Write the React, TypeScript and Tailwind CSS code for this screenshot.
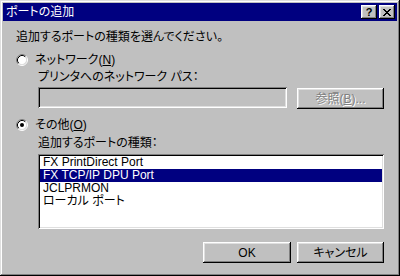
import type { ReactNode } from "react";

const raised =
  "shadow-[inset_-1px_-1px_#000,inset_1px_1px_#fff,inset_-2px_-2px_#808080,inset_2px_2px_#dfdfdf]";
const sunken =
  "shadow-[inset_1px_1px_#808080,inset_-1px_-1px_#fff,inset_2px_2px_#000,inset_-2px_-2px_#dfdfdf]";

function Radio({ checked }: { checked?: boolean }) {
  return (
    <svg width="12" height="12" viewBox="0 0 12 12" className="shrink-0">
      <circle cx="6" cy="6" r="4.5" fill="#fff" />
      <path d="M2.11 9.89 A5.5 5.5 0 0 1 9.89 2.11" fill="none" stroke="#808080" />
      <path d="M9.89 2.11 A5.5 5.5 0 0 1 2.11 9.89" fill="none" stroke="#fff" />
      <path d="M2.82 9.18 A4.5 4.5 0 0 1 9.18 2.82" fill="none" stroke="#000" />
      <path d="M9.18 2.82 A4.5 4.5 0 0 1 2.82 9.18" fill="none" stroke="#dfdfdf" />
      {checked ? <circle cx="6" cy="6" r="2" fill="#000" /> : null}
    </svg>
  );
}

function Button({ children, w, disabled }: { children: ReactNode; w: string; disabled?: boolean }) {
  return (
    <div
      className={`flex h-[21px] items-center justify-center bg-[#c0c0c0] ${raised} ${w} ${
        disabled ? "text-[#808080] [text-shadow:1px_1px_#fff]" : "text-black"
      }`}
    >
      {children}
    </div>
  );
}

const items = ["FX PrintDirect Port", "FX TCP/IP DPU Port", "JCLPRMON", "ローカル ポート"];

export default function App() {
  return (
    <div
      className="h-[276px] w-[400px] bg-[#c0c0c0] p-[3px] text-[12px] leading-[16px] text-black shadow-[inset_-1px_-1px_#000,inset_1px_1px_#dfdfdf,inset_-2px_-2px_#808080,inset_2px_2px_#fff] [font-feature-settings:'palt'] [font-family:'Liberation_Sans','Noto_Sans_CJK_JP',sans-serif]"
    >
      <div className="flex h-[18px] items-center bg-[#000080] pl-[3px] pr-[2px]">
        <span className="flex-1 text-white">ポートの追加</span>
        <div className="flex gap-[2px]">
          <div className={`flex h-[14px] w-[16px] items-center justify-center bg-[#c0c0c0] ${raised}`}>
            <span className="text-[11px] font-bold leading-none">?</span>
          </div>
          <div className={`flex h-[14px] w-[16px] items-center justify-center bg-[#c0c0c0] ${raised}`}>
            <svg width="8" height="7" viewBox="0 0 8 7">
              <path d="M0 0h2v1h1v1h2V1h1V0h2v1H7v1H6v1H5v1h1v1h1v1h1v1H6V6H5V5H3v1H2v1H0V6h1V5h1V4h1V3H2V2H1V1H0z" fill="#000" />
            </svg>
          </div>
        </div>
      </div>

      <div className="pl-[13px]">
        <p className="mt-[8px]">追加するポートの種類を選んでください。</p>

        <div className="mt-[7px] flex h-[16px] items-center gap-[7px]">
          <Radio />
          <span>
            ネットワーク(<u>N</u>)
          </span>
        </div>

        <div className="ml-[22px]">
          <p className="mt-[1px]">プリンタへのネットワーク パス：</p>
          <div className="mt-[2px] flex h-[22px] items-start">
            <div className={`h-[21px] w-[249px] bg-[#c0c0c0] ${sunken}`} />
            <div className="ml-[10px] mt-[1px]">
              <Button w="w-[87px]" disabled>
                参照(<u>B</u>)...
              </Button>
            </div>
          </div>
        </div>

        <div className="mt-[8px] flex h-[16px] items-center gap-[7px]">
          <Radio checked />
          <span>
            その他(<u>O</u>)
          </span>
        </div>

        <div className="ml-[22px]">
          <p className="mt-[2px]">追加するポートの種類：</p>
          <div className={`mt-[3px] h-[75px] w-[346px] bg-white p-[2px] ${sunken}`}>
            {items.map((it, i) => (
              <div
                key={it}
                className={`h-[13px] pl-[3px] leading-[13px] whitespace-pre ${
                  i === 1 ? "bg-[#000080] text-white" : ""
                }`}
              >
                {it}
              </div>
            ))}
          </div>
        </div>

        <div className="ml-[187px] mt-[13px] flex gap-[6px]">
          <Button w="w-[88px]">OK</Button>
          <Button w="w-[87px]">キャンセル</Button>
        </div>
      </div>
    </div>
  );
}
